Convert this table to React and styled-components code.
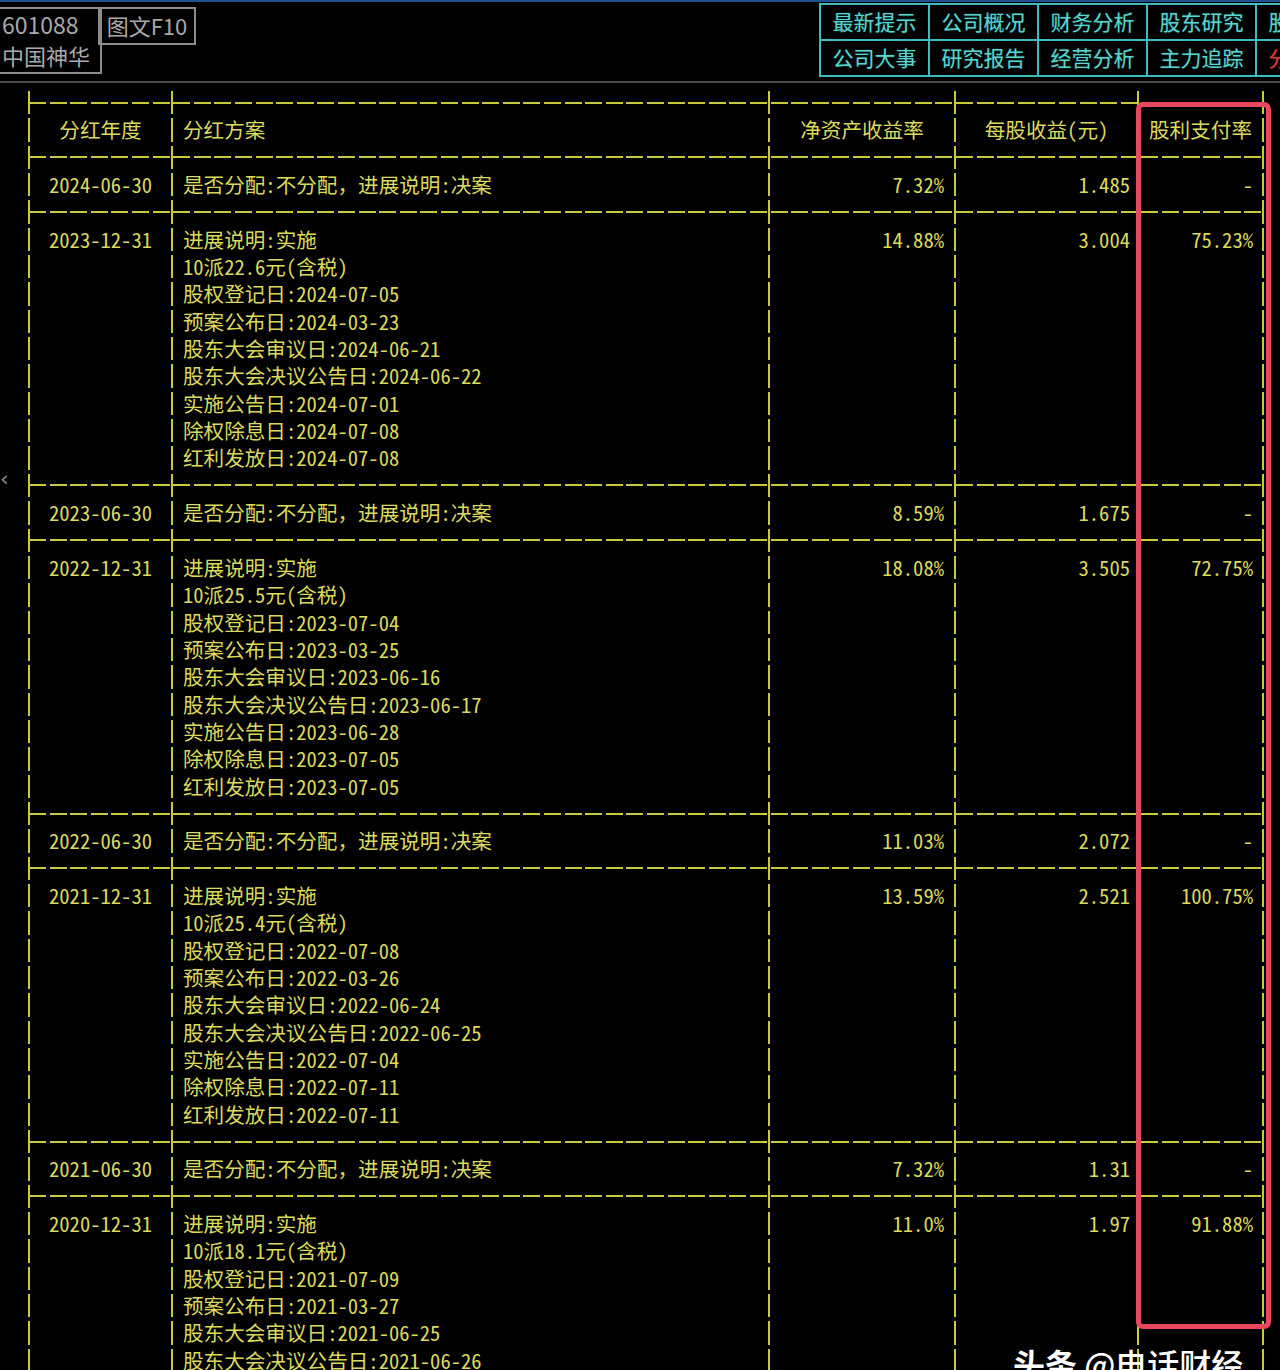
import React from "react";
import styled, { createGlobalStyle, css } from "styled-components";

const LINE = "#c9c93c";
const INK = "#dada5e";
const ROW_H = 27.35;
const MONO = `"Noto Sans Mono CJK SC", "Noto Sans CJK SC", monospace`;

const Global = createGlobalStyle`
  html, body { margin: 0; padding: 0; background: #000; }
  body { font-family: "Noto Sans CJK SC", sans-serif; }
`;

const Page = styled.div`
  position: relative;
  width: 1280px;
  height: 1370px;
  overflow: hidden;
  background: #000;
`;

const TopBar = styled.header`
  display: flex;
  align-items: flex-start;
  height: 79px;
  border-top: 2px solid #23508e;
  border-bottom: 2px solid #4b4b4b;
  overflow: hidden;
`;

const StockBox = styled.div`
  box-sizing: border-box;
  flex-shrink: 0;
  width: 104px;
  height: 67px;
  margin: 5px 0 0 -2px;
  border: 2px solid #8c8c8c;
  padding: 0 0 0 2px;
  display: flex;
  flex-direction: column;
  color: #a9a9a9;
  font-size: 22px;
  line-height: 31px;
`;

const StockLine = styled.div`
  height: 31px;
  white-space: nowrap;
  font-size: ${(p) => (p.$code ? "23px" : "22px")};
  line-height: 30px;
  overflow: visible;
`;

const F10Box = styled.div`
  box-sizing: border-box;
  flex-shrink: 0;
  width: 98px;
  height: 38px;
  margin: 5px 0 0 -4px;
  padding-bottom: 3px;
  border: 2px solid #8c8c8c;
  display: flex;
  align-items: center;
  justify-content: center;
  color: #a9a9a9;
  font-size: 22px;
`;

const Tabs = styled.nav`
  flex-shrink: 0;
  display: grid;
  grid-template-columns: repeat(5, 109px);
  grid-auto-rows: 36px;
  margin: 1px 0 0 623px;
  border-left: 2px solid #3cbcbc;
  border-top: 2px solid #3cbcbc;
`;

const Tab = styled.div`
  display: flex;
  align-items: center;
  justify-content: center;
  padding-bottom: 3px;
  border-right: 2px solid #3cbcbc;
  border-bottom: 2px solid #3cbcbc;
  font-size: 21px;
  color: ${(p) => (p.$red ? "#e23a3a" : "#58d6d2")};
  text-shadow: 0 0 2px ${(p) => (p.$red ? "rgba(226,58,58,0.4)" : "rgba(88,214,210,0.35)")};
  white-space: nowrap;
`;

const Table = styled.div`
  margin: 6px 0 0 29px;
  width: 1234px;
  font-family: ${MONO};
  font-size: 20.6px;
  color: ${INK};
`;

const Row = styled.div`
  display: grid;
  grid-template-columns: 143px 597px 186px 183px 125px;
  height: ${ROW_H}px;
  line-height: ${ROW_H}px;
  ${(p) =>
    p.$rule &&
    css`
      background-image: repeating-linear-gradient(
        90deg,
        ${LINE} 0 17px,
        transparent 17px 20.6px
      );
      background-size: 100% 2px;
      background-position: 0 50%;
      background-repeat: no-repeat;
    `}
`;

const Cell = styled.div`
  position: relative;
  display: flex;
  align-items: center;
  justify-content: ${(p) =>
    p.$align === "right" ? "flex-end" : p.$align === "center" ? "center" : "flex-start"};
  padding: 0 ${(p) => p.$padR || 0}px 0 ${(p) => p.$padL || 0}px;
  white-space: pre;
  &::before {
    content: "";
    position: absolute;
    left: -1px;
    top: 2px;
    bottom: 2px;
    width: 2px;
    background: ${LINE};
  }
  &:last-child::after {
    content: "";
    position: absolute;
    right: -1px;
    top: 2px;
    bottom: 2px;
    width: 2px;
    background: ${LINE};
  }
`;

const Highlight = styled.div`
  position: absolute;
  left: 1136px;
  top: 102px;
  width: 135px;
  height: 1227px;
  box-sizing: border-box;
  border: 5px solid #e8485f;
  border-radius: 7px;
  pointer-events: none;
`;

const SideHandle = styled.div`
  position: absolute;
  left: 0;
  top: 466px;
  font-family: "DejaVu Sans", sans-serif;
  font-size: 22px;
  color: #8a8a8a;
`;

const Watermark = styled.div`
  position: absolute;
  left: 1013px;
  top: 1343px;
  color: #fff;
  font-size: 32px;
  line-height: 40px;
  white-space: nowrap;
  b { font-weight: 700; }
  span { font-weight: 500; }
`;

const records = [
  { date: "2024-06-30", plan: ["是否分配:不分配，进展说明:决案"], roe: "7.32%", eps: "1.485", pay: "-" },
  {
    date: "2023-12-31",
    plan: [
      "进展说明:实施",
      "10派22.6元(含税)",
      "股权登记日:2024-07-05",
      "预案公布日:2024-03-23",
      "股东大会审议日:2024-06-21",
      "股东大会决议公告日:2024-06-22",
      "实施公告日:2024-07-01",
      "除权除息日:2024-07-08",
      "红利发放日:2024-07-08",
    ],
    roe: "14.88%",
    eps: "3.004",
    pay: "75.23%",
  },
  { date: "2023-06-30", plan: ["是否分配:不分配，进展说明:决案"], roe: "8.59%", eps: "1.675", pay: "-" },
  {
    date: "2022-12-31",
    plan: [
      "进展说明:实施",
      "10派25.5元(含税)",
      "股权登记日:2023-07-04",
      "预案公布日:2023-03-25",
      "股东大会审议日:2023-06-16",
      "股东大会决议公告日:2023-06-17",
      "实施公告日:2023-06-28",
      "除权除息日:2023-07-05",
      "红利发放日:2023-07-05",
    ],
    roe: "18.08%",
    eps: "3.505",
    pay: "72.75%",
  },
  { date: "2022-06-30", plan: ["是否分配:不分配，进展说明:决案"], roe: "11.03%", eps: "2.072", pay: "-" },
  {
    date: "2021-12-31",
    plan: [
      "进展说明:实施",
      "10派25.4元(含税)",
      "股权登记日:2022-07-08",
      "预案公布日:2022-03-26",
      "股东大会审议日:2022-06-24",
      "股东大会决议公告日:2022-06-25",
      "实施公告日:2022-07-04",
      "除权除息日:2022-07-11",
      "红利发放日:2022-07-11",
    ],
    roe: "13.59%",
    eps: "2.521",
    pay: "100.75%",
  },
  { date: "2021-06-30", plan: ["是否分配:不分配，进展说明:决案"], roe: "7.32%", eps: "1.31", pay: "-" },
  {
    date: "2020-12-31",
    plan: [
      "进展说明:实施",
      "10派18.1元(含税)",
      "股权登记日:2021-07-09",
      "预案公布日:2021-03-27",
      "股东大会审议日:2021-06-25",
      "股东大会决议公告日:2021-06-26",
      "实施公告日:2021-07-05",
      "除权除息日:2021-07-12",
      "红利发放日:2021-07-12",
    ],
    roe: "11.0%",
    eps: "1.97",
    pay: "91.88%",
  },
];

const RuleRow = () => (
  <Row $rule>
    <Cell />
    <Cell />
    <Cell />
    <Cell />
    <Cell />
  </Row>
);

const Record = ({ r }) => (
  <>
    {r.plan.map((line, i) => (
      <Row key={i}>
        <Cell $align="center">{i === 0 ? r.date : ""}</Cell>
        <Cell $padL={11}>{line}</Cell>
        <Cell $align="right" $padR={11}>{i === 0 ? r.roe : ""}</Cell>
        <Cell $align="right" $padR={8}>{i === 0 ? r.eps : ""}</Cell>
        <Cell $align="right" $padR={10}>{i === 0 ? r.pay : ""}</Cell>
      </Row>
    ))}
    <RuleRow />
  </>
);

export default function App() {
  return (
    <Page>
      <Global />
      <TopBar>
        <StockBox>
          <StockLine $code>601088</StockLine>
          <StockLine>中国神华</StockLine>
        </StockBox>
        <F10Box>图文F10</F10Box>
        <Tabs>
          <Tab>最新提示</Tab>
          <Tab>公司概况</Tab>
          <Tab>财务分析</Tab>
          <Tab>股东研究</Tab>
          <Tab>股本结构</Tab>
          <Tab>公司大事</Tab>
          <Tab>研究报告</Tab>
          <Tab>经营分析</Tab>
          <Tab>主力追踪</Tab>
          <Tab $red>分红融资</Tab>
        </Tabs>
      </TopBar>
      <Table>
        <RuleRow />
        <Row>
          <Cell $align="center">分红年度</Cell>
          <Cell $padL={11}>分红方案</Cell>
          <Cell $align="center">净资产收益率</Cell>
          <Cell $align="center">每股收益(元)</Cell>
          <Cell $align="center">股利支付率</Cell>
        </Row>
        <RuleRow />
        {records.map((r) => (
          <Record key={r.date} r={r} />
        ))}
      </Table>
      <Highlight />
      <SideHandle>‹</SideHandle>
      <Watermark>
        <b>头条</b> <span>@电话财经</span>
      </Watermark>
    </Page>
  );
}
